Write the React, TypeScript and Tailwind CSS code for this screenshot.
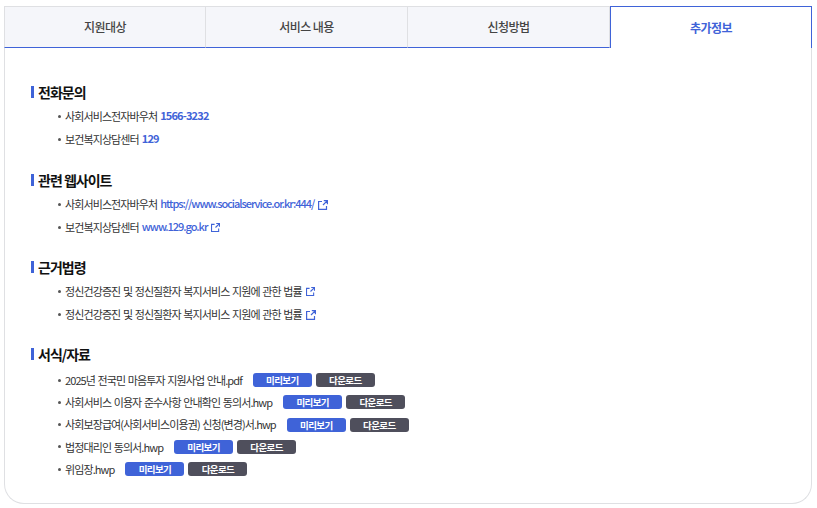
const font = "font-['Noto_Sans_CJK_KR','Roboto',sans-serif]";

function Ext({ className = "w-[9px] h-[9px]" }: { className?: string }) {
  return (
    <svg viewBox="0 0 10 10" className={`ml-[4px] shrink-0 ${className}`} fill="none" stroke="#3f63d8" strokeWidth="1.2">
      <path d="M4 1.5H.6v7.9h7.9V6" />
      <path d="M5.8.6h3.6v3.6M9.4.6L5 5" />
    </svg>
  );
}

function Heading({ children }: { children: React.ReactNode }) {
  return (
    <h3 className="flex items-center h-[20px] text-[14px] font-bold tracking-[-1px] text-[#111]">
      <span className="w-[3px] h-[12px] bg-[#3f63d8] mr-[4px]" />
      {children}
    </h3>
  );
}

function Row({ children, tall = "h-[23px]" }: { children: React.ReactNode; tall?: string }) {
  return (
    <li className={`flex items-center ${tall} pl-[27px] text-[11px] tracking-[-0.9px] [word-spacing:1px] text-[#333]`}>
      <span className="w-[3px] h-[3px] rounded-full bg-[#555] mr-[4px]" />
      {children}
    </li>
  );
}

function Tel({ children }: { children: React.ReactNode }) {
  return <span className="ml-[3px] font-bold tracking-[-0.85px] text-[#3f63d8] -translate-y-[1px]">{children}</span>;
}

function Url({ children }: { children: React.ReactNode }) {
  return <span className="ml-[3px] font-medium tracking-[-1.03px] text-[#3f63d8] -translate-y-[1px]">{children}</span>;
}

function Btns() {
  return (
    <span className="flex gap-[4px] ml-[11px] [word-spacing:0]">
      <span className="w-[59px] h-[14px] rounded-[3px] bg-[#3f63d8] text-white text-[9.5px] tracking-[-0.6px] font-bold flex items-center justify-center">미리보기</span>
      <span className="w-[59px] h-[14px] rounded-[3px] bg-[#4f4f5c] text-white text-[9.5px] tracking-[-0.6px] font-bold flex items-center justify-center">다운로드</span>
    </span>
  );
}

const files = [
  "2025년 전국민 마음투자 지원사업 안내.pdf",
  "사회서비스 이용자 준수사항 안내확인 동의서.hwp",
  "사회보장급여(사회서비스이용권) 신청(변경)서.hwp",
  "법정대리인 동의서.hwp",
  "위임장.hwp",
];

export default function App() {
  return (
    <div className={`w-[817px] h-[508px] bg-white pt-[6px] pl-[4px] ${font}`}>
      <div className="w-[808px]">
        <div className="flex h-[42px] text-[12px] font-medium tracking-[-0.6px]">
          <div className="w-[202px] bg-[#f5f6fa] border-t border-l border-r border-[#dfe0e3] border-b-[#3f63d8] border-b text-[#444] flex items-center justify-center">지원대상</div>
          <div className="w-[202px] bg-[#f5f6fa] border-t border-r border-[#dfe0e3] border-b-[#3f63d8] border-b text-[#444] flex items-center justify-center">서비스 내용</div>
          <div className="w-[202px] bg-[#f5f6fa] border-t border-r border-[#dfe0e3] border-b-[#3f63d8] border-b text-[#444] flex items-center justify-center">신청방법</div>
          <div className="flex-1 bg-white border-t border-l border-r border-[#3f63d8] text-[#3f63d8] font-bold flex items-center justify-center">추가정보</div>
        </div>
        <div className="h-[456px] border border-t-0 border-[#dfe0e3] rounded-b-[20px] pl-[26px] pt-[34px]">
          <Heading>전화문의</Heading>
          <ul className="mt-[3px] mb-[19px]">
            <Row>사회서비스전자바우처<Tel>1566-3232</Tel></Row>
            <Row>보건복지상담센터<Tel>129</Tel></Row>
          </ul>
          <Heading>관련 웹사이트</Heading>
          <ul className="mt-[3px] mb-[18px]">
            <Row>사회서비스전자바우처<Url>https://www.socialservice.or.kr:444/</Url><Ext className="w-[10px] h-[10px]" /></Row>
            <Row>보건복지상담센터<Url>www.129.go.kr</Url><Ext /></Row>
          </ul>
          <Heading>근거법령</Heading>
          <ul className="mt-[3px] mb-[18px]">
            <Row>정신건강증진 및 정신질환자 복지서비스 지원에 관한 법률<Ext /></Row>
            <Row>정신건강증진 및 정신질환자 복지서비스 지원에 관한 법률<Ext className="w-[10px] h-[10px]" /></Row>
          </ul>
          <Heading>서식/자료</Heading>
          <ul className="mt-[5px]">
            {files.map((f) => (
              <Row key={f} tall="h-[22.25px]">{f}<Btns /></Row>
            ))}
          </ul>
        </div>
      </div>
    </div>
  );
}
